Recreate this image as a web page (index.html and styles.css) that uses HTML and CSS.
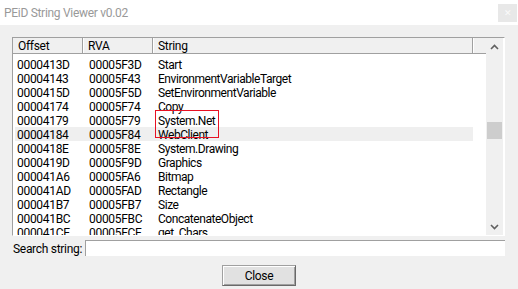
FILE: index.html
```html
<!DOCTYPE html>
<html lang="en">
<head>
  <meta charset="UTF-8" />
  <title>PEiD String Viewer v0.02</title>
  <link rel="stylesheet" href="styles.css">
</head>
<body>

<div class="window">
  <div class="titlebar">
    <span class="title">PEiD String Viewer v0.02</span>
    <span class="close-x">✕</span>
  </div>

  <div class="content">
    <div class="listbox">
      <div class="list">
        <div class="header">
          <div class="hcell c-offset">Offset</div>
          <div class="hcell c-rva">RVA</div>
          <div class="hcell c-string">String</div>
          <div class="hcell c-rest"></div>
        </div>

        <div class="rows">
          <div class="row"><span>0000413D</span><span>00005F3D</span><span>Start</span></div>
          <div class="row"><span>00004143</span><span>00005F43</span><span>EnvironmentVariableTarget</span></div>
          <div class="row"><span>0000415D</span><span>00005F5D</span><span>SetEnvironmentVariable</span></div>
          <div class="row"><span>00004174</span><span>00005F74</span><span>Copy</span></div>
          <div class="row"><span>00004179</span><span>00005F79</span><span>System.Net</span></div>
          <div class="row hover"><span>00004184</span><span>00005F84</span><span>WebClient</span></div>
          <div class="row"><span>0000418E</span><span>00005F8E</span><span>System.Drawing</span></div>
          <div class="row"><span>0000419D</span><span>00005F9D</span><span>Graphics</span></div>
          <div class="row"><span>000041A6</span><span>00005FA6</span><span>Bitmap</span></div>
          <div class="row"><span>000041AD</span><span>00005FAD</span><span>Rectangle</span></div>
          <div class="row"><span>000041B7</span><span>00005FB7</span><span>Size</span></div>
          <div class="row"><span>000041BC</span><span>00005FBC</span><span>ConcatenateObject</span></div>
          <div class="row"><span>000041CE</span><span>00005FCE</span><span>get_Chars</span></div>

          <!-- annotation box drawn over the list -->
          <div class="mark"></div>
        </div>
      </div>

      <div class="scrollbar">
        <div class="arrow">
          <svg width="9" height="6" viewBox="0 0 9 6"><polyline points="1,5 4.5,1.5 8,5" fill="none" stroke="#606060" stroke-width="1.6"/></svg>
        </div>
        <div class="track">
          <div class="thumb"></div>
        </div>
        <div class="arrow">
          <svg width="9" height="6" viewBox="0 0 9 6"><polyline points="1,1 4.5,4.5 8,1" fill="none" stroke="#606060" stroke-width="1.6"/></svg>
        </div>
      </div>
    </div>

    <div class="search">
      <label>Search string:</label>
      <div class="input"></div>
    </div>

    <div class="actions">
      <button class="btn">Close</button>
    </div>
  </div>
</div>

</body>
</html>
```

FILE: styles.css
```css
/* Base */
* {
  box-sizing: border-box;
  margin: 0;
  padding: 0;
}

body {
  font-family: 'Segoe UI', Roboto, sans-serif;
  font-size: 12px;
  letter-spacing: -0.3px;
  color: #000;
  background: #f0f0f0;
  width: 518px;
  height: 289px;
  overflow: hidden;
}

.window {
  display: flex;
  flex-direction: column;
  height: 289px;
}

/* Title bar */
.titlebar {
  height: 25px;
  background: #fff;
  display: flex;
  align-items: center;
  justify-content: space-between;
  padding-left: 4px;
}

.title {
  color: #999;
  font-size: 12px;
  white-space: nowrap;
  padding-top: 1px;
}

.close-x {
  width: 19px;
  height: 18px;
  margin-right: 1px;
  background: #e8e8e8;
  color: #fafafa;
  font-size: 9px;
  display: flex;
  align-items: center;
  justify-content: center;
}

/* Dialog body */
.content {
  padding: 12px 13px 0 12px;
}

.listbox {
  height: 199px;
  display: flex;
  background: #fff;
  border: 1px solid;
  border-color: #a0a0a0 #fff #fff #a0a0a0;
  padding-right: 1px;
  overflow: hidden;
}

.list {
  width: 473px;
  overflow: hidden;
}

.header {
  display: flex;
  height: 16px;
  background: #f0f0f0;
  border-bottom: 1px solid #a0a0a0;
}

.hcell {
  line-height: 16px;
  padding-left: 5px;
  border-right: 1px solid #a0a0a0;
  box-shadow: inset 1px 0 #fff;
  white-space: nowrap;
}

.c-offset { width: 70px; box-shadow: none; }
.c-rva { width: 70px; }
.c-string { width: 320px; }
.c-rest { flex: 1; border-right: none; }

.rows {
  position: relative;
  padding-top: 3px;
}

.row {
  display: grid;
  grid-template-columns: 72px 69px 1fr;
  width: 458px;
  margin-left: 2px;
  height: 14px;
  line-height: 15px;
  white-space: nowrap;
}

.row span {
  padding-left: 2px;
  padding-top: 1px;
}

.row span:last-child {
  letter-spacing: -0.45px;
}

.row.hover {
  background: #efefef;
}

.mark {
  position: absolute;
  left: 142px;
  top: 56px;
  width: 64px;
  height: 28px;
  border: 1px solid #e81123;
}

/* Scrollbar */
.scrollbar {
  width: 17px;
  background: #f0f0f0;
  display: flex;
  flex-direction: column;
}

.arrow {
  height: 17px;
  display: flex;
  align-items: center;
  justify-content: center;
}

.track {
  flex: 1;
  padding-top: 67px;
}

.thumb {
  height: 17px;
  margin: 0 1px;
  background: #cdcdcd;
}

/* Search row */
.search {
  display: flex;
  align-items: center;
  margin-top: 4px;
  height: 16px;
}

.search label {
  width: 73px;
  padding-left: 1px;
  padding-top: 2px;
  white-space: nowrap;
}

.input {
  flex: 1;
  height: 16px;
  background: #fff;
  border-top: 1px solid #a0a0a0;
  border-left: 1px solid #a0a0a0;
}

/* Buttons */
.actions {
  display: flex;
  justify-content: center;
  margin-top: 9px;
  padding-left: 1px;
}

.btn {
  width: 74px;
  height: 21px;
  font-family: inherit;
  font-size: 12px;
  letter-spacing: -0.3px;
  background: #e1e1e1;
  border: 1px solid;
  border-color: #a0a0a0 #696969 #696969 #a0a0a0;
  box-shadow: inset 1px 1px #fff, inset -1px -1px #a0a0a0;
}
```
